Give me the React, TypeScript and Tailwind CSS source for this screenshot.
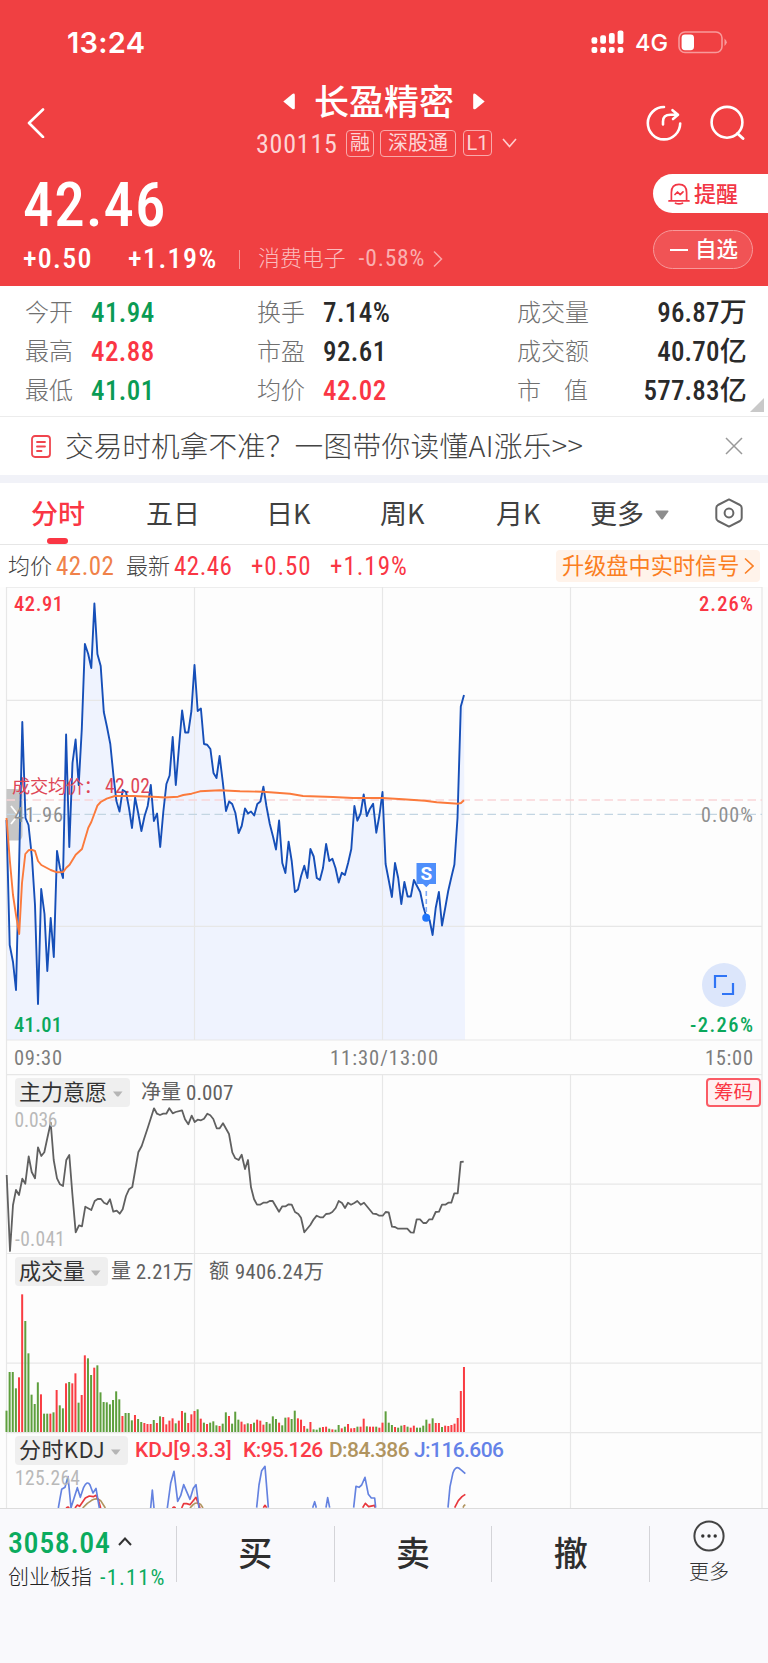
import React from "react";

const DIN = "font-['Roboto_Condensed','Noto_Sans_CJK_SC',sans-serif] leading-none whitespace-nowrap";
const CJK = "font-['Noto_Sans_CJK_SC',sans-serif] leading-none whitespace-nowrap";

const STEP = 3.1333;
const X0 = 6.5;

const price: number[][] = [
  [6.5, 820], [9.7, 945], [13, 962], [16, 990], [19.2, 860], [22.3, 722], [25.5, 818], [28.5, 825], [32, 858], [35, 905], [38, 1004], [41.2, 889], [44.5, 914], [47.3, 971],
  [50.7, 918], [53.8, 957], [57, 851], [60, 868], [63, 878], [66.1, 734.5], [69.3, 847], [72.5, 763], [75.6, 739.5], [78.7, 785], [81.8, 729], [84.9, 644], [88.2, 654], [91.3, 668],
  [94.4, 603.5], [97.4, 654], [100.7, 666], [103.8, 712], [107, 727], [110.3, 744], [113.5, 776], [116.4, 801], [119.5, 811.5], [122.7, 790], [126, 792], [129, 808], [132, 828],
  [135.1, 797.5], [138.2, 813], [141.4, 831], [144.6, 816], [147.7, 806], [150.8, 785], [153.9, 821], [157.1, 813.5], [160.2, 847], [163.3, 812], [166.4, 784], [169.6, 775.5],
  [172.7, 737], [175.8, 785], [179, 747], [182.1, 710.5], [185.2, 732.5], [188.3, 732.5], [191.4, 711], [194.5, 665], [197.7, 711], [200.9, 708.5], [204, 744], [207.2, 744.7],
  [210.4, 749], [213.5, 773], [216.5, 778], [219.6, 756], [222.8, 782], [226, 811], [229.1, 801.5], [232.2, 804], [235.4, 813], [238.6, 833], [241.7, 826], [245, 808.5], [248, 813.5],
  [251, 811.5], [254.2, 815.5], [257.3, 804], [260.4, 801.5], [263.4, 786.7], [266.4, 806], [269.8, 824], [273, 836.5], [276, 849.5], [279.1, 820.5], [282.3, 863], [285.4, 873],
  [288.6, 841.7], [291.7, 861], [294.9, 892], [298, 889.5], [301.1, 876], [304.3, 865.7], [307.4, 878], [310.4, 849], [313.7, 856.5], [316.8, 878], [319.9, 880], [323, 868],
  [326.1, 844], [329.3, 861], [332.4, 858.8], [335.5, 868], [338.7, 882.5], [341.8, 872.7], [344.9, 875], [348.1, 863], [351.3, 849], [354.4, 806], [357.4, 820.7], [360.6, 813.5],
  [363.7, 794.5], [366.8, 816], [370, 808.7], [373.1, 803.7], [376.3, 832.7], [379.4, 815.5], [382.5, 792], [385.6, 864], [388.7, 880], [391.9, 897], [395, 863], [398.2, 878],
  [401.3, 904], [404.4, 882], [407.6, 896.5], [410.8, 896.5], [413.9, 880], [417, 886], [420.2, 892], [423.4, 907], [426.4, 917], [429.6, 920], [432.6, 935], [435.7, 908], [438.9, 892],
  [442, 925.5], [445.2, 908], [448.2, 891], [451.4, 877], [454.4, 864.5], [457.5, 818], [460.8, 706.5], [464, 695],
];

const average: number[][] = [
  [6.5, 818], [9.8, 860], [13, 895], [16, 915], [19.2, 934], [22, 883], [25.3, 854], [28.5, 850.3], [31.6, 849.7], [35, 851], [38, 861], [41.3, 865], [50.7, 870], [57, 872.3], [63.2, 872],
  [66.3, 867.7], [69.6, 864.7], [75.7, 854.7], [82, 849], [88.3, 827.7], [91.3, 822], [97.4, 805.7], [100.7, 802], [106.7, 798.7], [115, 796], [133, 796], [158, 797], [165, 797.5],
  [178, 796.7], [183.3, 795], [191.6, 793.7], [200, 791.3], [220, 790.3], [240, 791.3], [263, 791.7], [290, 793.7], [303, 796], [333, 797], [353, 798], [382.5, 798], [403, 799.3],
  [425, 800.7], [436.7, 802.3], [458.3, 803.7], [461, 803], [464, 800.3],
];

const intent: number[][] = [
  [20, 315], [30, 543], [39, 405], [48, 360], [57, 375], [67, 326], [76, 341], [86, 259], [95, 306], [105, 325], [114, 232], [124, 258], [133, 247], [142, 205], [152, 158], [161, 270], [171, 325],
  [180, 343], [189, 348], [199, 270], [208, 255], [217, 370], [227, 487], [237, 466], [246, 469], [256, 410], [274, 420], [284, 393], [293, 387], [303, 387], [312, 398], [321, 403], [330, 388],
  [340, 425], [350, 422], [359, 431], [368, 418], [378, 378], [387, 358], [397, 351], [415, 247], [425, 228], [443, 174], [462, 115], [471, 131], [480, 135], [490, 131], [499, 131], [508, 115],
  [518, 130], [527, 126], [546, 121], [555, 148], [565, 163], [575, 137], [584, 156], [593, 149], [603, 151], [612, 146], [622, 131], [631, 136], [640, 147], [650, 175], [659, 175], [669, 160],
  [687, 192], [697, 247], [706, 265], [716, 270], [725, 254], [735, 297], [744, 270], [753, 352], [762, 387], [771, 404], [780, 404], [790, 398], [800, 398], [809, 393], [818, 393], [837, 425],
  [847, 409], [857, 409], [866, 403], [875, 404], [885, 426], [895, 432], [903, 443], [913, 487], [931, 465], [941, 448], [950, 437], [960, 442], [969, 442], [978, 432], [988, 431], [997, 426],
  [1007, 414], [1016, 393], [1026, 399], [1035, 414], [1044, 398], [1053, 404], [1063, 399], [1072, 393], [1082, 404], [1092, 398], [1119, 431], [1129, 432], [1138, 437], [1148, 437],
  [1157, 426], [1166, 427], [1176, 470], [1185, 471], [1194, 476], [1222, 476], [1232, 487], [1241, 488], [1250, 448], [1260, 448], [1270, 459], [1279, 459], [1288, 448], [1297, 448],
  [1307, 426], [1317, 425], [1326, 404], [1336, 404], [1345, 398], [1354, 398], [1363, 370], [1373, 370], [1382, 276], [1391, 275],
].map(([x, y]) => [x / 3, 1070 + y / 3]);

const volume =
  "g482 g366 g366 g415 r382 r133 g213 g310 g434 g462 g397 r433 g491 g491 r491 g487 r420 g466 g475 r400 g396 r400 r370 g458 r435 r316 g325 g375 r353 g346 g427 g456 g457 g463 g450 g424 g448 r498 g489 g489 g511 r495 g507 g516 r519 r522 r522 g510 r519 g499 r501 r523 r512 r505 g520 r512 r483 g488 r519 r493 r483 g478 r506 g518 r522 g518 g514 g526 r528 g521 g487 r498 g521 g485 g509 r515 r523 g520 r522 g518 r509 r512 r524 g516 g521 g499 g507 r518 g526 g503 r502 g507 g482 r505 r509 r528 g536 r516 g538 g539 g533 r531 r530 g536 r538 g539 g525 r535 g530 r522 r535 r534 g530 r530 r506 g529 r530 r530 g530 r533 r518 g484 g518 g525 r531 g533 g527 r525 g530 r533 r527 g533 g533 g527 g509 r521 g505 r519 r519 g531 r527 r528 r525 r521 r504 r423 r351"
    .split(" ")
    .map((v) => ({ up: v[0] === "r", y: 1250 + Number(v.slice(1)) / 3 }));

const kdjJ =
  "M175 249L180 220L185 193L195 187L204 155L213 248L232 188L241 217L251 187Q262 165 270 180L279 204L288 190L298 249M452 249L457 195L462 249M502 249L512 175L522 139L533 229L542 212L551 179L570 223L580 190L588 179L597 249M770 248L777 180L785 137L795 124L805 248M938 248L944 230L949 248M978 248L983 218L989 248M1061 248L1068 184L1077 187L1085 180L1095 157L1105 208L1114 219L1124 219L1127 248M1344 248L1350 185L1359 143Q1366 124 1376 129L1385 136L1396 146";
const kdjK =
  "M198 249L204 246L208 249M225 249L232 240L239 244L256 219L268 213L280 215L288 211L295 225L302 249M517 249L522 246L527 249M545 249L551 236L560 236L570 239L588 217L600 249M790 248L795 241L800 248M1088 248L1096 235L1106 245L1124 241L1125 248M1364 248L1375 227L1386 215L1396 208";
const kdjD = "M248 249L262 235L275 226Q290 217 302 227L316 249M570 249L580 238Q592 230 602 238L609 249M1389 248L1392 242L1396 239";

const line = (pts: number[][]) => "M" + pts.map(([x, y]) => `${x.toFixed(1)} ${y.toFixed(1)}`).join("L");

function Grid({ top, bottom, rows }: { top: number; bottom: number; rows: number[] }) {
  return (
    <g stroke="#e7e7e7" strokeWidth="1.2" fill="none">
      {[194.5, 382.5, 570.5].map((x) => (
        <path key={x} d={`M${x} ${top}V${bottom}`} />
      ))}
      {rows.map((y) => (
        <path key={y} d={`M6.5 ${y}H762`} />
      ))}
      <path d={`M6.5 ${top}V${bottom}M762 ${top}V${bottom}`} />
    </g>
  );
}

function Label({ x, y, w, size, fill, end, medium, children }: { x: number; y: number; w: number; size: number; fill: string; end?: boolean; medium?: boolean; children: string }) {
  return (
    <text
      x={x}
      y={y}
      fontSize={size}
      fill={fill}
      textLength={w}
      textAnchor={end ? "end" : "start"}
      fontWeight={medium ? 500 : 400}
      className="font-['Roboto_Condensed','Noto_Sans_CJK_SC',sans-serif]"
    >
      {children}
    </text>
  );
}

function Chip({ width, children }: { width: string; children: React.ReactNode }) {
  return (
    <div className={`${width} ${CJK} ml-[15px] flex h-[29px] items-center rounded bg-[#efefef] pl-1 pr-[7px] text-[22px] text-[#333]`}>
      <span className="-mt-[5px]">{children}</span>
      <svg className="ml-auto mt-0.5" width="10" height="6" viewBox="0 0 10 6">
        <path d="M0 .5H9.5L6 5Q4.8 6 3.6 5Z" fill="#b5b5b5" />
      </svg>
    </div>
  );
}

function Stat({ label, value, color, wide, spaced }: { label: string; value: string; color: string; wide?: boolean; spaced?: boolean }) {
  return (
    <div className="flex h-[39px] items-center">
      <span className={`${CJK} -mt-[6px] text-[24px] font-light text-[#707070]`}>
        {spaced ? (
          <span className="flex w-[71px] justify-between">
            <span>{label[0]}</span>
            <span>{label[1]}</span>
          </span>
        ) : (
          label
        )}
      </span>
      <span className={`${DIN} ${color} ${wide ? "ml-auto tracking-[0.008em]" : "ml-[18px] tracking-[0.015em]"} text-[27px] font-medium`}>{value}</span>
    </div>
  );
}

const green = "text-[#0a9b54]";
const red = "text-[#fa3644]";
const dark = "text-[#2a2a2a]";

export default function App() {
  return (
    <div className="flex h-[1663px] w-[768px] flex-col overflow-hidden bg-white">
      <header className="flex h-[286px] flex-col bg-[#f04042] text-white">
        <div className="flex h-[83px] items-center pl-[67px] pr-10 pt-px">
          <span className="w-[80px] font-['Inter',sans-serif] text-[29px] font-semibold leading-none tracking-[0.01em]">13:24</span>
          <svg className="ml-auto" width="33" height="24" viewBox="0 0 33 24" fill="#fff">
            {[0, 1, 2, 3].map((i) => (
              <React.Fragment key={i}>
                <rect x={0.5 + i * 8.7} y={[7.3, 5.3, 3, 0.5][i]} width="5.8" height={[6.5, 8.5, 10.8, 13.4][i]} rx="2" />
                <rect x={0.5 + i * 8.7} y="17" width="5.8" height="6" rx="2" />
              </React.Fragment>
            ))}
          </svg>
          <span className="ml-[11px] mt-0.5 font-['Inter',sans-serif] text-[23.5px] font-medium leading-none">4G</span>
          <svg className="ml-[10px]" width="50" height="23" viewBox="0 0 50 23">
            <rect x="1" y="1" width="43" height="20.5" rx="6" fill="none" stroke="#f89a9b" strokeWidth="1.6" />
            <rect x="3.6" y="3.4" width="12.4" height="15.8" rx="3.4" fill="#fff" />
            <path d="M46.5 7.5Q51 11.3 46.5 15Z" fill="#f89a9b" />
          </svg>
        </div>
        <div className="flex h-[79px]">
          <svg className="ml-[27px] mt-[25px]" width="18" height="30" viewBox="0 0 18 30">
            <path d="M16 1.5L2 15L16 29" fill="none" stroke="#fff" strokeWidth="2.6" strokeLinecap="round" strokeLinejoin="round" />
          </svg>
          <div className="ml-[211px] w-[265px]">
            <div className="flex h-9 items-center">
              <svg className="ml-[27px]" width="12" height="17" viewBox="0 0 12 17">
                <path d="M.3 8.5L9.4 .9Q11.8 0 11.8 2V15Q11.8 17 9.4 16Z" fill="#fff" />
              </svg>
              <span className={`${CJK} -mt-1 ml-[19px] text-[35px] font-medium`}>长盈精密</span>
              <svg className="ml-[19px]" width="12" height="17" viewBox="0 0 12 17">
                <path d="M11.7 8.5L2.6 .9Q.2 0 .2 2V15Q.2 17 2.6 16Z" fill="#fff" />
              </svg>
            </div>
            <div className="mt-[10px] flex h-7 items-center text-[#fdd5d6]">
              <span className={`${DIN} mt-px w-[82px] text-[26px] tracking-[0.03em]`}>300115</span>
              <span className={`${CJK} ml-2 flex h-[27px] w-7 items-center justify-center rounded border border-[#f9a9aa] pb-0.5 text-[20px]`}>融</span>
              <span className={`${CJK} ml-1.5 flex h-[27px] w-[76px] items-center justify-center rounded border border-[#f9a9aa] pb-0.5 text-[20px]`}>深股通</span>
              <span className="ml-[7px] flex h-[26px] w-[29px] items-center justify-center rounded border border-[#f9a9aa] font-['Roboto',sans-serif] text-[20px] leading-none">L1</span>
              <svg className="ml-[10px]" width="15" height="10" viewBox="0 0 15 10">
                <path d="M1 1L7.5 8.5L14 1" fill="none" stroke="#fcc" strokeWidth="1.6" />
              </svg>
            </div>
          </div>
          <svg className="ml-[124px] mt-[21px]" width="38" height="38" viewBox="0 0 38 38" fill="none" stroke="#fff" strokeWidth="2.6" strokeLinecap="round" strokeLinejoin="round">
            <path d="M19 3A16.2 16.2 0 1 0 35.2 19.5M18 20.5V17.5Q18 10.8 25.5 10.8H32M27.5 6.2L33 10.8L28 15" />
          </svg>
          <svg className="ml-[26px] mt-[21px]" width="38" height="38" viewBox="0 0 38 38" fill="none" stroke="#fff" strokeWidth="2.6" strokeLinecap="round">
            <circle cx="18" cy="18.3" r="15.4" />
            <path d="M28.5 29.5L34 34.5" strokeWidth="3" />
          </svg>
        </div>
        <div className="flex flex-1 justify-between">
          <div className="pl-[23px] pt-[13px]">
            <div className={`${DIN} text-[61px] font-medium tracking-[0.014em]`}>42.46</div>
            <div className="mt-[9px] flex h-7 items-center">
              <span className={`${DIN} w-[105px] text-[28px] font-medium tracking-[0.045em]`}>+0.50</span>
              <span className={`${DIN} w-[111px] text-[28px] font-medium tracking-[0.05em]`}>+1.19%</span>
              <span className="h-[19px] w-px bg-[#f79596]" />
              <span className={`${CJK} -mt-[5px] ml-[18px] text-[21.9px] font-light text-[#fbbcbd]`}>消费电子</span>
              <span className={`${DIN} ml-[13px] text-[23.5px] tracking-[0.035em] text-[#faafb0]`}>-0.58%</span>
              <svg className="ml-[8px]" width="10" height="18" viewBox="0 0 10 18">
                <path d="M1 1.5L8.5 9L1 16.5" fill="none" stroke="#f9a8a9" strokeWidth="1.5" />
              </svg>
            </div>
          </div>
          <div className="flex w-[115px] flex-col gap-[17px] pt-3">
            <button className="flex h-[39px] items-center rounded-l-full bg-white pl-[15px] text-[#f23645]">
              <svg width="22" height="22" viewBox="0 0 22 22" fill="none" stroke="#f23645" strokeWidth="1.7" strokeLinejoin="round" strokeLinecap="round">
                <path d="M3.4 17.5V9.5Q3.4 1.3 11 1.3T18.6 9.5V17.5M1 17.9H21M7.5 20.2Q11 21.6 14.5 20.2M7 11.5L9.5 9L12.2 11.6L15 8.8" />
              </svg>
              <span className={`${CJK} -mt-[3px] ml-1 text-[22px] font-medium`}>提醒</span>
            </button>
            <button className="flex h-[39px] w-[100px] items-center rounded-full border border-[#f79899] bg-[#f15355] pl-4">
              <span className="h-0.5 w-[18px] bg-white" />
              <span className={`${CJK} -mt-[4px] ml-[7px] text-[21.5px] font-medium`}>自选</span>
            </button>
          </div>
        </div>
      </header>

      <section className="relative flex h-[131px] border-b border-[#ececec] pl-[25px] pr-[21px] pt-2">
        <div className="w-[232px]">
          <Stat label="今开" value="41.94" color={green} />
          <Stat label="最高" value="42.88" color={red} />
          <Stat label="最低" value="41.01" color={green} />
        </div>
        <div className="w-[260px]">
          <Stat label="换手" value="7.14%" color={dark} />
          <Stat label="市盈" value="92.61" color={dark} />
          <Stat label="均价" value="42.02" color={red} />
        </div>
        <div className="flex-1">
          <Stat label="成交量" value="96.87万" color={dark} wide />
          <Stat label="成交额" value="40.70亿" color={dark} wide />
          <Stat label="市值" value="577.83亿" color={dark} wide spaced />
        </div>
        <svg className="absolute bottom-[4px] right-1" width="14" height="14" viewBox="0 0 14 14">
          <path d="M14 0V14H0Z" fill="#c9c9c9" />
        </svg>
      </section>

      <section className="flex h-[58px] items-center pl-[31px] pr-[25px]">
        <svg width="20" height="23" viewBox="0 0 20 23" fill="none" stroke="#f0454e" strokeWidth="1.8" strokeLinecap="round">
          <rect x="1" y="1" width="18" height="21" rx="3" />
          <path d="M6 7H14M6 11.5H14M6 16H10.5" />
        </svg>
        <span className={`${CJK} -mt-[2px] ml-[14px] flex text-[28.7px] font-light text-[#444]`}>
          <span>交易时机拿不准？</span>
          <span className="tracking-[0.011em]">一图带你读懂AI涨乐&gt;&gt;</span>
        </span>
        <svg className="ml-auto" width="18" height="18" viewBox="0 0 18 18">
          <path d="M1 1L17 17M17 1L1 17" stroke="#999" strokeWidth="1.5" />
        </svg>
      </section>
      <div className="h-2 bg-[#f1f2f8]" />

      <nav className={`${CJK} flex h-[62px] items-center border-b border-[#e6e6e6] text-[27px] text-[#404040]`}>
        <div className="relative ml-[31px] flex h-full w-[115px] items-center font-medium text-[#fa3644]">
          <span className="-mt-[3px]">分时</span>
          <span className="absolute bottom-0 left-4 h-1.5 w-[21px] rounded-full bg-[#fa3644]" />
        </div>
        <span className="-mt-[3px] w-[120px]">五日</span>
        <span className="-mt-[3px] w-[114px]">日K</span>
        <span className="-mt-[3px] w-[116px]">周K</span>
        <span className="-mt-[3px] w-[94px]">月K</span>
        <span className="-mt-[3px]">更多</span>
        <svg className="ml-[11px] mt-0.5" width="14" height="10" viewBox="0 0 14 10">
          <path d="M1 .5H13Q13.8.8 13.3 1.7L8 9Q7 10 6 9L.6 1.7Q.2.8 1 .5Z" fill="#8d8d8d" />
        </svg>
        <svg className="-mt-[2px] ml-[46px]" width="28" height="30" viewBox="0 0 28 30" fill="none" stroke="#666" strokeWidth="2" strokeLinejoin="round">
          <path d="M14 1.4L25 7Q26.7 8 26.7 10V20Q26.7 22 25 23L14 28.6L3 23Q1.3 22 1.3 20V10Q1.3 8 3 7Z" />
          <circle cx="14" cy="15" r="4.4" />
        </svg>
      </nav>

      <div className="flex h-[42px] items-center pl-2 pr-2">
        <span className={`${CJK} -mt-[4px] w-[48px] text-[22px] font-light text-[#444]`}>均价</span>
        <span className={`${DIN} mt-px w-[70px] text-[25px] tracking-[0.02em] text-[#f0824a]`}>42.02</span>
        <span className={`${CJK} -mt-[4px] w-[48px] text-[22px] font-light text-[#444]`}>最新</span>
        <span className={`${DIN} mt-px w-[77px] text-[25px] tracking-[0.02em] ${red}`}>42.46</span>
        <span className={`${DIN} mt-px w-[79px] text-[25px] tracking-[0.035em] ${red}`}>+0.50</span>
        <span className={`${DIN} mt-px text-[25px] tracking-[0.04em] ${red}`}>+1.19%</span>
        <button className={`${CJK} -mt-px ml-auto flex h-8 w-[204px] items-center rounded bg-[#fff3ea] pl-[6px] text-[22.2px] text-[#fb7e22]`}>
          <span className="-mt-[3px]">升级盘中实时信号</span>
          <svg className="ml-[4px]" width="10" height="18" viewBox="0 0 10 18">
            <path d="M1 1.5L9 9L1 16.5" fill="none" stroke="#fb7e22" strokeWidth="1.6" />
          </svg>
        </button>
      </div>

      <main className="flex h-[921px] flex-col overflow-hidden bg-[#fdfdfd]">
        <div className="relative h-[487px]">
          <svg width="768" height="487" viewBox="0 587 768 487">
            <path d={`${line(price)}L465 1040L6.5 1040Z`} fill="#eff3fe" />
            <Grid top={587} bottom={1040} rows={[587.2, 700.3, 926.3, 1040]} />
            <path d="M6.5 1040V1074M762 1040V1074" stroke="#e7e7e7" strokeWidth="1.2" />
            <path d="M6.5 789H17Q22.5 789 22.5 794V835Q22.5 840.5 17 840.5H6.5Z" fill="#c6c6c6" />
            <path d="M11 806L18 815L11 824" fill="none" stroke="#fff" strokeWidth="1.8" />
            <path d="M6.5 800H762" stroke="#f9d5d7" strokeWidth="1.6" strokeDasharray="8.5 4.5" />
            <path d="M6.5 814.4H762" stroke="#c3d5e2" strokeWidth="1.4" strokeDasharray="8.5 4.5" />
            <path d={line(price)} fill="none" stroke="#164fb8" strokeWidth="1.9" strokeLinejoin="round" />
            <path d={line(average)} fill="none" stroke="#fb7a3c" strokeWidth="1.9" strokeLinejoin="round" />
            <path d="M416.5 863H436V884H429.5L426.3 887.3L423 884H416.5Z" fill="#4f8ffb" />
            <text x="426.3" y="880.3" textAnchor="middle" fontSize="19" fontWeight="700" fill="#fff" className="font-['Roboto',sans-serif]">S</text>
            <path d="M426.3 891V914" stroke="#7fabf8" strokeWidth="1.6" strokeDasharray="5 3" />
            <circle cx="426.2" cy="917.7" r="4" fill="#1f75fb" />
            <Label x={14} y={611} w={49} size={20.5} fill="#fa3644" medium>42.91</Label>
            <Label x={753} y={611} w={54} size={20.5} fill="#fa3644" end medium>2.26%</Label>
            <Label x={14} y={821.5} w={49} size={20.5} fill="#8f8f8f">41.96</Label>
            <Label x={753} y={822} w={52} size={20} fill="#8f8f8f" end>0.00%</Label>
            <Label x={14} y={1031.5} w={48} size={20.5} fill="#0aa85c" medium>41.01</Label>
            <Label x={753} y={1031.5} w={63} size={20.5} fill="#0aa85c" end medium>-2.26%</Label>
            <Label x={12} y={793} w={90} size={18.2} fill="#de4656">成交均价：</Label>
            <Label x={105} y={792.5} w={45} size={19.5} fill="#de4656">42.02</Label>
            <Label x={14} y={1065} w={48} size={20.5} fill="#7d7d7d">09:30</Label>
            <Label x={330} y={1065} w={108} size={20.5} fill="#7d7d7d">11:30/13:00</Label>
            <Label x={753} y={1065} w={48} size={20.5} fill="#7d7d7d" end>15:00</Label>
          </svg>
          <button className="absolute bottom-[67px] right-[22px] flex h-[44px] w-[44px] items-center justify-center rounded-full bg-[#dce6fb]">
            <svg width="22" height="22" viewBox="0 0 22 22" fill="none" stroke="#2f74f5" strokeWidth="2.2">
              <path d="M2 14V2H14M20 9V20H9" />
            </svg>
          </button>
        </div>

        <div className="relative h-[179px]">
          <svg className="absolute inset-0" width="768" height="179" viewBox="0 1074 768 179">
            <Grid top={1074} bottom={1253} rows={[1074.6, 1184.2]} />
            <path d={line(intent)} fill="none" stroke="#606060" strokeWidth="1.8" strokeLinejoin="round" />
            <Label x={14.5} y={1127} w={43} size={19.5} fill="#b9b9b9">0.036</Label>
            <Label x={15} y={1246} w={50} size={19.5} fill="#b9b9b9">-0.041</Label>
          </svg>
          <div className="relative flex items-center pt-1">
            <Chip width="w-[115px]">主力意愿</Chip>
            <span className={`${CJK} -mt-[3px] ml-[11px] text-[20px] text-[#606060]`}>净量</span>
            <span className={`${DIN} ml-[5px] mt-px text-[21px] tracking-[0.005em] text-[#606060]`}>0.007</span>
            <span className={`${CJK} ml-auto mr-[7px] flex h-[29px] w-[55px] items-center justify-center rounded-sm border-2 border-[#fa5c66] bg-[#fff0f1] pb-[3px] text-[19.5px] ${red}`}>筹码</span>
          </div>
        </div>

        <div className="relative h-[179px]">
          <svg className="absolute inset-0" width="768" height="179" viewBox="0 1253 768 179">
            <Grid top={1253} bottom={1432} rows={[1253.3, 1363.2]} />
            {volume.map((v, i) => (
              <rect key={i} x={X0 + i * STEP - 1} y={v.y} width="2" height={1432 - v.y} fill={v.up ? "#f93c42" : "#5e9f3d"} />
            ))}
          </svg>
          <div className="relative flex items-center pt-1">
            <Chip width="w-[93px]">成交量</Chip>
            <span className={`${CJK} -mt-[3px] ml-[3px] text-[20px] text-[#606060]`}>量</span>
            <span className={`${DIN} ml-[5px] mt-px w-[73px] text-[20.5px] tracking-[0.015em] text-[#606060]`}>2.21万</span>
            <span className={`${CJK} -mt-[3px] text-[20px] text-[#606060]`}>额</span>
            <span className={`${DIN} ml-[6px] mt-px text-[20.5px] tracking-[0.016em] text-[#606060]`}>9406.24万</span>
          </div>
        </div>

        <div className="relative h-[76px]">
          <svg className="absolute inset-0" width="768" height="76" viewBox="0 1432 768 76">
            <Grid top={1432} bottom={1508} rows={[1432.6]} />
            <g transform="translate(0 1425) scale(.33333)" fill="none" strokeWidth="5" strokeLinejoin="round">
              <path d={kdjD} stroke="#b0945f" />
              <path d={kdjK} stroke="#e8383d" />
              <path d={kdjJ} stroke="#6482e0" />
            </g>
            <Label x={15} y={1485} w={65} size={19.5} fill="#b9b9b9">125.264</Label>
          </svg>
          <div className="relative flex items-center pt-1 font-['Roboto',sans-serif] text-[21px] font-medium leading-none tracking-[-0.028em]">
            <div className="font-normal tracking-[0.02em]">
              <Chip width="w-[113px]">分时KDJ</Chip>
            </div>
            <span className="ml-[7px] w-[108px] tracking-[-0.005em] text-[#fb3b48]">KDJ[9.3.3]</span>
            <span className="w-[86px] text-[#fb3b48]">K:95.126</span>
            <span className="w-[85px] text-[#b0945f]">D:84.386</span>
            <span className="text-[#6482e8]">J:116.606</span>
          </div>
        </div>
      </main>

      <footer className="flex h-[155px] items-start border-t border-[#dcdcdc] bg-[#f9f9fc] pt-[17px]">
        <div className="-mt-0.5 flex h-[66px] w-[176px] flex-col pl-2">
          <div className="flex h-[38px] items-center">
            <span className={`${DIN} w-[102px] text-[30px] font-medium tracking-[0.02em] text-[#0bab5e]`}>3058.04</span>
            <svg className="-mt-1 ml-2" width="14" height="9" viewBox="0 0 14 9">
              <path d="M1 8L7 1.5L13 8" fill="none" stroke="#333" strokeWidth="2" />
            </svg>
          </div>
          <div className="flex h-7 items-center">
            <span className={`${CJK} -mt-px text-[21px] font-light text-[#222]`}>创业板指</span>
            <span className={`${DIN} ml-2 mt-[3px] text-[22px] tracking-[0.06em] text-[#0bab5e]`}>-1.11%</span>
          </div>
        </div>
        {["买", "卖", "撤"].map((t) => (
          <div key={t} className={`${CJK} flex h-[56px] w-[157.7px] items-center justify-center border-l border-[#d4d4d8] text-[34px] font-medium text-[#2e2e2e]`}>
            <span className="-mt-[4px]">{t}</span>
          </div>
        ))}
        <div className="flex h-[56px] flex-1 flex-col items-center border-l border-[#d4d4d8]">
          <svg className="-mt-[6px]" width="32" height="32" viewBox="0 0 32 32">
            <circle cx="16" cy="16" r="14.6" fill="none" stroke="#444" strokeWidth="2" />
            <circle cx="9.8" cy="16" r="1.7" fill="#333" />
            <circle cx="16" cy="16" r="1.7" fill="#333" />
            <circle cx="22.2" cy="16" r="1.7" fill="#333" />
          </svg>
          <span className={`${CJK} mt-[9px] text-[20px] font-light text-[#333]`}>更多</span>
        </div>
      </footer>
    </div>
  );
}
